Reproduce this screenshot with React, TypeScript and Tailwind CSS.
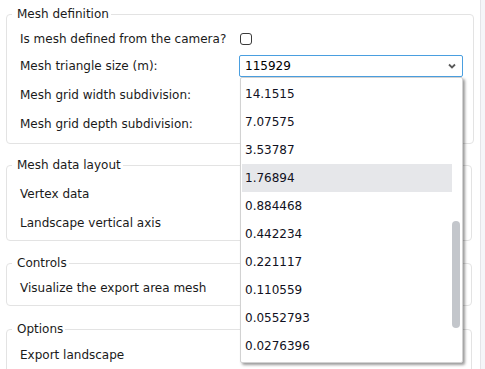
import React from "react";

const options = [
  "14.1515",
  "7.07575",
  "3.53787",
  "1.76894",
  "0.884468",
  "0.442234",
  "0.221117",
  "0.110559",
  "0.0552793",
  "0.0276396",
];

const Group: React.FC<{ title: string; className?: string; children: React.ReactNode }> = ({ title, className = "", children }) => (
  <fieldset className={`border border-[#e3e3e3] rounded-[4px] pl-[13px] pr-[10px] ${className}`}>
    <legend className="-ml-[8px] pl-[5px] pr-[2px] leading-[16px] text-[#1a1a1a]">{title}</legend>
    {children}
  </fieldset>
);

const Row: React.FC<{ label: string; h: string; children?: React.ReactNode }> = ({ label, h, children }) => (
  <div className={`flex items-center ${h}`}>
    <div className="w-[219px] shrink-0 text-[#1a1a1a]">{label}</div>
    <div className="flex-1 flex items-center">{children}</div>
  </div>
);

const App: React.FC = () => {
  return (
    <div
      className="flex w-[485px] h-[369px] overflow-hidden bg-white text-[12px]"
      style={{ fontFamily: "'DejaVu Sans', Verdana, sans-serif" }}
    >
      <div className="w-[480px] shrink-0 pl-[6px] pr-[8px] pt-[6px]">
        <Group title="Mesh definition" className="pt-[4px] pb-[5px]">
          <Row label="Is mesh defined from the camera?" h="h-[26px]">
            <div className="ml-[1px] w-[12px] h-[12px] rounded-[3px] border-[1.5px] border-[#3a3a3a] bg-white" />
          </Row>
          <Row label="Mesh triangle size (m):" h="h-[28px]">
            <div className="relative">
              <div className="w-[224px] h-[22px] border border-[#4a9fe0] rounded-[2px] bg-white flex items-center pl-[5px] pr-[6px] text-black">
                <span className="flex-1">115929</span>
                <svg width="8" height="6" viewBox="0 0 8 6">
                  <path d="M1 1.5 L4 4.5 L7 1.5" fill="none" stroke="#5a5a5a" strokeWidth="1.8" />
                </svg>
              </div>
              <div className="absolute left-[1px] top-full z-10 w-[223px] h-[286px] border border-[#d2d2d2] bg-white rounded-[2px] shadow-[2px_2px_3px_rgba(0,0,0,0.4)] flex pt-[2px] pl-[1px] pr-[2px]">
                <div className="w-[210px]">
                  {options.map((o) => (
                    <div
                      key={o}
                      className={`h-[28px] flex items-center pl-[3px] text-[#111122] ${o === "1.76894" ? "bg-[#e6e7ea]" : ""}`}
                    >
                      {o}
                    </div>
                  ))}
                </div>
                <div className="w-[8px]">
                  <div className="mt-[141px] h-[107px] w-[8px] rounded-full bg-[#c3c6cb]" />
                </div>
              </div>
            </div>
          </Row>
          <Row label="Mesh grid width subdivision:" h="h-[29px]" />
          <Row label="Mesh grid depth subdivision:" h="h-[29px]" />
        </Group>

        <Group title="Mesh data layout" className="mt-[13px] pt-[6px] pb-[3px]">
          <Row label="Vertex data" h="h-[29px]" />
          <Row label="Landscape vertical axis" h="h-[29px]" />
        </Group>

        <Group title="Controls" className="mt-[14px] pt-[4px] pb-[4px]">
          <Row label="Visualize the export area mesh" h="h-[26px]" />
        </Group>

        <Group title="Options" className="mt-[15px] pt-[4px] pb-[4px]">
          <Row label="Export landscape" h="h-[28px]" />
        </Group>
      </div>
      <div className="flex-1 border-l border-[#e4e4e8] bg-[#f5f5f8]" />
    </div>
  );
};

export default App;
